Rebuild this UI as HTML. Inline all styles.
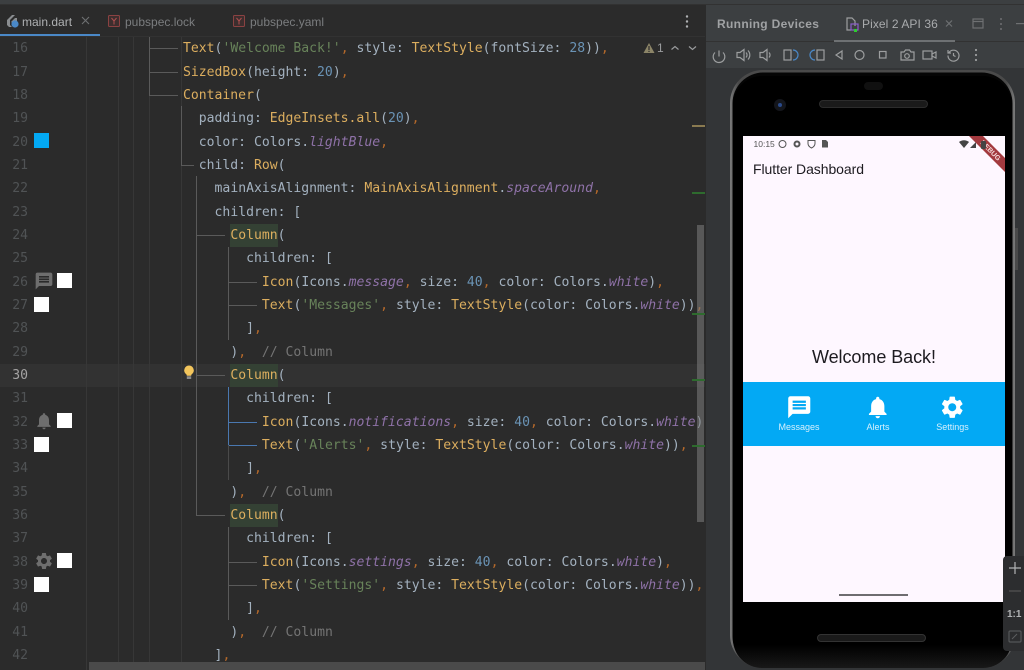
<!DOCTYPE html>
<html lang="en"><head><meta charset="utf-8"><title>Flutter Dashboard</title>
<style>
html,body{margin:0;padding:0;background:#2b2b2b}
#r{position:relative;width:1024px;height:670px;overflow:hidden;background:#2b2b2b}
.l,.n{position:absolute;white-space:pre;font:13.1px/23.33px "DejaVu Sans Mono","Liberation Mono",monospace;top:calc(37.4px + var(--l)*23.33px)}
.l{left:calc(183px + var(--x)*7.89px);color:#a3b1bf}
.n{left:0;width:28px;text-align:right;color:#505355}
.f{color:#dcae5f}.s{color:#68835a}.d{color:#6a93b5}.c{color:#b5692a}.i{color:#8f72a8;font-style:italic}.m{color:#747474}
.a{position:absolute}
.w{position:absolute;width:15px;height:15px;background:#fff}
.t{position:absolute;font:12px "Liberation Sans",sans-serif;color:#9c9e9f;top:15px;white-space:pre}
svg{position:absolute;overflow:visible}
#code{position:absolute;left:0;top:37px;width:705px;height:633px;overflow:hidden}
#code .l{margin-top:-37px}#code .n{margin-top:-37px}
</style></head><body><div id="r">
<svg width="0" height="0"><defs>
<path id="msg" d="M20 2H4c-1.1 0-1.99.9-1.99 2L2 22l4-4h14c1.1 0 2-.9 2-2V4c0-1.1-.9-2-2-2zm-2 12H6v-2h12v2zm0-3H6V9h12v2zm0-3H6V6h12v2z"/>
<path id="bell" d="M12 22c1.1 0 2-.9 2-2h-4c0 1.1.89 2 2 2zm6-6v-5c0-3.07-1.64-5.64-4.5-6.32V4c0-.83-.67-1.5-1.5-1.5s-1.5.67-1.5 1.5v.68C7.63 5.36 6 7.92 6 11v5l-2 2v1h16v-1l-2-2z"/>
<path id="gear" d="M19.14 12.94c.04-.3.06-.61.06-.94 0-.32-.02-.64-.07-.94l2.03-1.58c.18-.14.23-.41.12-.61l-1.92-3.32c-.12-.22-.37-.29-.59-.22l-2.39.96c-.5-.38-1.03-.7-1.62-.94l-.36-2.54c-.04-.24-.24-.41-.48-.41h-3.84c-.24 0-.43.17-.47.41l-.36 2.54c-.59.24-1.13.57-1.62.94l-2.39-.96c-.22-.08-.47 0-.59.22L2.74 8.87c-.12.21-.08.47.12.61l2.03 1.58c-.05.3-.09.63-.09.94s.02.64.07.94l-2.03 1.58c-.18.14-.23.41-.12.61l1.92 3.32c.12.22.37.29.59.22l2.39-.96c.5.38 1.03.7 1.62.94l.36 2.54c.05.24.24.41.48.41h3.84c.24 0 .44-.17.47-.41l.36-2.54c.59-.24 1.13-.56 1.62-.94l2.39.96c.22.08.47 0 .59-.22l1.92-3.32c.12-.22.07-.47-.12-.61l-2.01-1.58zM12 15.6c-1.98 0-3.6-1.62-3.6-3.6s1.62-3.6 3.6-3.6 3.6 1.62 3.6 3.6-1.62 3.6-3.6 3.6z"/>
<linearGradient id="fr" x1="0" x2="1" y1="0" y2="0"><stop offset="0" stop-color="#7a7a7a"/><stop offset=".03" stop-color="#4a4a4a"/><stop offset=".97" stop-color="#4a4a4a"/><stop offset="1" stop-color="#7a7a7a"/></linearGradient>
<linearGradient id="chin" x1="0" x2="0" y1="0" y2="1"><stop offset="0" stop-color="#000"/><stop offset=".96" stop-color="#000"/><stop offset="1" stop-color="#181818"/></linearGradient>
</defs></svg>

<!-- top strip & tabs -->
<div class="a" style="left:0;top:0;width:1024px;height:4px;background:#3c3f41"></div>
<div class="a" style="left:0;top:4px;width:1024px;height:1px;background:#323232"></div>
<div class="a" style="left:0;top:36px;width:705px;height:1px;background:#323232"></div>
<div class="a" style="left:0;top:34px;width:100px;height:2px;background:#4a88c7"></div>
<svg style="left:6px;top:14px" width="14" height="14"><path d="M1 6 6 1h3L4 6v5l2 2H3L1 11z" fill="#8a8d90"/><path d="M5 8l4-4h2v3l-3 3z" fill="#8a8d90"/><circle cx="9" cy="10" r="3.600" fill="#4a88c7"/></svg>
<div class="t" style="left:22px;color:#afb1b3">main.dart</div>
<svg style="left:81px;top:16px" width="10" height="10"><path d="M1 1l7 7M8 1 1 8" stroke="#6e7072" stroke-width="1.100"/></svg>
<svg style="left:108px;top:15px" width="12" height="12"><rect x=".5" y=".5" width="11" height="11" rx="1" fill="#3d2e2e" stroke="#8b4242"/><path d="M3.500 3l2.500 3L8.500 3M6 6v3.500" fill="none" stroke="#b05050"/></svg>
<div class="t" style="left:125px;color:#7b7d7f">pubspec.lock</div>
<svg style="left:233px;top:15px" width="12" height="12"><rect x=".5" y=".5" width="11" height="11" rx="1" fill="#3d2e2e" stroke="#8b4242"/><path d="M3.500 3l2.500 3L8.500 3M6 6v3.500" fill="none" stroke="#b05050"/></svg>
<div class="t" style="left:250px;color:#7b7d7f">pubspec.yaml</div>
<svg style="left:685px;top:15px" width="4" height="13"><circle cx="2" cy="1.500" r="1.200" fill="#afb1b3"/><circle cx="2" cy="6.500" r="1.200" fill="#afb1b3"/><circle cx="2" cy="11.500" r="1.200" fill="#afb1b3"/></svg>

<!-- editor -->
<div id="code">
<div class="a" style="left:0;top:327px;width:705px;height:23px;background:#323232"></div>
<div class="a" style="left:230px;top:187px;width:48px;height:23px;background:#344134"></div>
<div class="a" style="left:230px;top:327px;width:48px;height:23px;background:#344134"></div>
<div class="a" style="left:230px;top:467px;width:48px;height:23px;background:#344134"></div>
<svg style="left:0;top:-37px" width="705" height="670">
<g stroke="#373737" fill="none"><path d="M86.500 37V670M118.500 37V670M133.500 37V670M149.500 37V670M181.500 37V670"/></g>
<g stroke="#5a5a5a" fill="none">
<path d="M149.500 37V95.500H178M149.500 48.500H178M149.500 72.500H178"/>
<path d="M181.500 106V165.500H194"/>
<path d="M196.500 176V515.500H225M196.500 235.500H225M196.500 375.500H225"/>
<path d="M228.500 247V340M228.500 282.500H257M228.500 305.500H257"/>
<path d="M228.500 527V620M228.500 562.500H257M228.500 585.500H257"/>
</g>
<path d="M228.500 387V445.500H257M228.500 422.500H257" stroke="#4a78b0" fill="none"/>
<path d="M228.500 445V480" stroke="#4a4a4a"/>
</svg>

<div class="n" style="--l:0">16</div><div class="n" style="--l:1">17</div><div class="n" style="--l:2">18</div><div class="n" style="--l:3">19</div><div class="n" style="--l:4">20</div><div class="n" style="--l:5">21</div><div class="n" style="--l:6">22</div><div class="n" style="--l:7">23</div><div class="n" style="--l:8">24</div><div class="n" style="--l:9">25</div><div class="n" style="--l:10">26</div><div class="n" style="--l:11">27</div><div class="n" style="--l:12">28</div><div class="n" style="--l:13">29</div><div class="n" style="--l:14;color:#a4a3a3">30</div><div class="n" style="--l:15">31</div><div class="n" style="--l:16">32</div><div class="n" style="--l:17">33</div><div class="n" style="--l:18">34</div><div class="n" style="--l:19">35</div><div class="n" style="--l:20">36</div><div class="n" style="--l:21">37</div><div class="n" style="--l:22">38</div><div class="n" style="--l:23">39</div><div class="n" style="--l:24">40</div><div class="n" style="--l:25">41</div><div class="n" style="--l:26">42</div>

<div class="l" style="--l:0;--x:0"><span class="f">Text</span>(<span class="s">'Welcome Back!'</span><span class="c">,</span> style: <span class="f">TextStyle</span>(fontSize: <span class="d">28</span>))<span class="c">,</span></div>
<div class="l" style="--l:1;--x:0"><span class="f">SizedBox</span>(height: <span class="d">20</span>)<span class="c">,</span></div>
<div class="l" style="--l:2;--x:0"><span class="f">Container</span>(</div>
<div class="l" style="--l:3;--x:2">padding: <span class="f">EdgeInsets.all</span>(<span class="d">20</span>)<span class="c">,</span></div>
<div class="l" style="--l:4;--x:2">color: Colors.<span class="i">lightBlue</span><span class="c">,</span></div>
<div class="l" style="--l:5;--x:2">child: <span class="f">Row</span>(</div>
<div class="l" style="--l:6;--x:4">mainAxisAlignment: <span class="f">MainAxisAlignment</span>.<span class="i">spaceAround</span><span class="c">,</span></div>
<div class="l" style="--l:7;--x:4">children: [</div>
<div class="l" style="--l:8;--x:6"><span class="f">Column</span>(</div>
<div class="l" style="--l:9;--x:8">children: [</div>
<div class="l" style="--l:10;--x:10"><span class="f">Icon</span>(Icons.<span class="i">message</span><span class="c">,</span> size: <span class="d">40</span><span class="c">,</span> color: Colors.<span class="i">white</span>)<span class="c">,</span></div>
<div class="l" style="--l:11;--x:10"><span class="f">Text</span>(<span class="s">'Messages'</span><span class="c">,</span> style: <span class="f">TextStyle</span>(color: Colors.<span class="i">white</span>))<span class="c">,</span></div>
<div class="l" style="--l:12;--x:8">]<span class="c">,</span></div>
<div class="l" style="--l:13;--x:6">)<span class="c">,</span>  <span class="m">// Column</span></div>
<div class="l" style="--l:14;--x:6"><span class="f">Column</span>(</div>
<div class="l" style="--l:15;--x:8">children: [</div>
<div class="l" style="--l:16;--x:10"><span class="f">Icon</span>(Icons.<span class="i">notifications</span><span class="c">,</span> size: <span class="d">40</span><span class="c">,</span> color: Colors.<span class="i">white</span>)</div>
<div class="l" style="--l:17;--x:10"><span class="f">Text</span>(<span class="s">'Alerts'</span><span class="c">,</span> style: <span class="f">TextStyle</span>(color: Colors.<span class="i">white</span>))<span class="c">,</span></div>
<div class="l" style="--l:18;--x:8">]<span class="c">,</span></div>
<div class="l" style="--l:19;--x:6">)<span class="c">,</span>  <span class="m">// Column</span></div>
<div class="l" style="--l:20;--x:6"><span class="f">Column</span>(</div>
<div class="l" style="--l:21;--x:8">children: [</div>
<div class="l" style="--l:22;--x:10"><span class="f">Icon</span>(Icons.<span class="i">settings</span><span class="c">,</span> size: <span class="d">40</span><span class="c">,</span> color: Colors.<span class="i">white</span>)<span class="c">,</span></div>
<div class="l" style="--l:23;--x:10"><span class="f">Text</span>(<span class="s">'Settings'</span><span class="c">,</span> style: <span class="f">TextStyle</span>(color: Colors.<span class="i">white</span>))<span class="c">,</span></div>
<div class="l" style="--l:24;--x:8">]<span class="c">,</span></div>
<div class="l" style="--l:25;--x:6">)<span class="c">,</span>  <span class="m">// Column</span></div>
<div class="l" style="--l:26;--x:4">]<span class="c">,</span></div>
</div>

<!-- gutter icons -->
<div class="a" style="left:34px;top:133px;width:15px;height:15px;background:#03a9f4"></div>
<div class="w" style="left:57px;top:273px"></div><div class="w" style="left:34px;top:297px"></div>
<div class="w" style="left:57px;top:413px"></div><div class="w" style="left:34px;top:437px"></div>
<div class="w" style="left:57px;top:553px"></div><div class="w" style="left:34px;top:577px"></div>
<svg style="left:34px;top:271px" width="20" height="20" viewBox="0 0 24 24" fill="#6e6e6e"><use href="#msg"/></svg>
<svg style="left:34px;top:411px" width="20" height="20" viewBox="0 0 24 24" fill="#6e6e6e"><use href="#bell"/></svg>
<svg style="left:34px;top:551px" width="20" height="20" viewBox="0 0 24 24" fill="#6e6e6e"><use href="#gear"/></svg>
<svg style="left:183px;top:365px" width="12" height="15"><path d="M6 0.500a4.800 4.800 0 0 0-3 8.500c.5.500.8 1 .8 1.800h4.400c0-.8.3-1.300.8-1.800a4.800 4.800 0 0 0-3-8.500z" fill="#f2c55c"/><rect x="3.800" y="11.300" width="4.400" height="2.700" fill="#8a8a8a"/></svg>

<!-- inspection widget -->
<svg style="left:643px;top:42px" width="62" height="12"><path d="M6 1 11.500 11H.5z" fill="#8c8568"/><rect x="5.400" y="4" width="1.200" height="4" fill="#2b2b2b"/><rect x="5.400" y="8.800" width="1.200" height="1.200" fill="#2b2b2b"/><path d="M28.500 7.500 32 4.500l3.500 3M46 4.500l3.500 3 3.500-3" stroke="#9a9c9e" stroke-width="1.200" fill="none"/></svg>
<div class="a" style="left:657px;top:41px;font:12px 'Liberation Sans',sans-serif;color:#9a9c9e">1</div>

<!-- stripes/scrollbars -->
<div class="a" style="left:692px;top:125px;width:13px;height:2px;background:#8a7a50"></div>
<div class="a" style="left:692px;top:192px;width:13px;height:2px;background:#2e6b2e"></div>
<div class="a" style="left:697px;top:225px;width:7px;height:297px;background:rgba(125,125,125,.55)"></div>
<div class="a" style="left:692px;top:313px;width:13px;height:2px;background:#2e6b2e"></div>
<div class="a" style="left:692px;top:379px;width:13px;height:2px;background:#2e6b2e"></div>
<div class="a" style="left:692px;top:445px;width:13px;height:2px;background:#2e6b2e"></div>
<div class="a" style="left:89px;top:662px;width:616px;height:8px;background:#4a4a4a"></div>

<!-- right panel -->
<div class="a" style="left:705px;top:5px;width:319px;height:665px;background:#333537;border-left:1px solid #2b2b2b;box-sizing:border-box"></div>
<div class="a" style="left:706px;top:5px;width:318px;height:63px;background:#3c3f41"></div>
<div class="a" style="left:706px;top:41px;width:318px;height:1px;background:#323232"></div>
<div class="a" style="left:834px;top:40px;width:121px;height:2px;background:#6e7173"></div>
<div class="a" style="left:717px;top:17px;font:bold 12px 'Liberation Sans',sans-serif;letter-spacing:.33px;color:#a0a2a4;white-space:pre">Running Devices</div>
<div class="a" style="left:862px;top:17px;font:12px 'Liberation Sans',sans-serif;letter-spacing:.08px;color:#a9abad;white-space:pre">Pixel 2 API 36</div>
<svg style="left:700px;top:5px" width="324" height="63" fill="none" stroke="#9c9e9f" stroke-width="1.200">
<path d="M147 20.500v-7.500h5l3 3v5M147 20.500v4.500h4"/><rect x="151" y="19" width="7" height="6" stroke="#8a5fc7"/><rect x="154" y="24" width="3" height="3" fill="#2ecc2e" stroke="none"/>
<path d="M246 15.500l6 6m0-6l-6 6" stroke="#6e7072"/>
<rect x="273" y="14" width="10" height="9" stroke="#6e7072"/><path d="M273 16.500h10" stroke="#6e7072"/>
<g fill="#6e7072" stroke="none"><circle cx="301" cy="14" r="1"/><circle cx="301" cy="19" r="1"/><circle cx="301" cy="24" r="1"/><rect x="316" y="18" width="8" height="1.200"/></g>
<!-- toolbar -->
<path d="M19 45.500v6M15 47.500a5.800 5.800 0 1 0 8 0"/>
<path d="M37 47.500h3l4-3v11l-4-3h-3zM46 47.500a3.500 3.500 0 0 1 0 5M48 45.500a6.500 6.500 0 0 1 0 9"/>
<path d="M60 47.500h3l4-3v11l-4-3h-3zM69 47.500a3.500 3.500 0 0 1 0 5"/>
<rect x="84" y="45" width="7" height="10"/><path d="M93 45a5 5 0 0 1 0 10" stroke="#4a88c7"/>
<rect x="117" y="45" width="7" height="10"/><path d="M115 55a5 5 0 0 1 0-10" stroke="#4a88c7"/>
<path d="M136 50l6-4v8z"/>
<circle cx="159.500" cy="50" r="4.500"/>
<rect x="179.500" y="46.500" width="6.500" height="6.500"/>
<path d="M201 47h3l1.500-2h4l1.500 2h3v8h-13z"/><circle cx="207" cy="51" r="2.300"/>
<rect x="223" y="46" width="9" height="8"/><path d="M232 49l4-2v6l-4-2z"/>
<path d="M249 47.500a5.500 5.500 0 1 1-1 3M248 45v3h3M253.500 48v2.500l2 1"/>
<g fill="#9c9e9f" stroke="none"><circle cx="276" cy="45" r="1.100"/><circle cx="276" cy="50" r="1.100"/><circle cx="276" cy="55" r="1.100"/></g>
</svg>

<!-- phone -->
<svg style="left:0;top:0" width="1024" height="670">
<rect x="730" y="70" width="285" height="598" rx="33" fill="url(#fr)"/>
<rect x="732.500" y="72.500" width="280" height="595" rx="31" fill="#050505"/>
<rect x="733" y="76" width="279" height="592" rx="29" fill="url(#chin)"/>
<rect x="1015" y="228" width="3" height="42" fill="#4a4a4a"/>
<rect x="819.500" y="100.500" width="108" height="7" rx="3.500" fill="#1a1a1a" stroke="#2c2c2c"/>
<rect x="864" y="82" width="19" height="8" rx="4" fill="#101010"/>
<circle cx="780" cy="105" r="6" fill="#14161c"/><circle cx="780" cy="105" r="2" fill="#2a4a8a"/>
<rect x="817.500" y="634.500" width="108" height="7" rx="3.500" fill="#1a1a1a" stroke="#333"/>
<!-- screen -->
<rect x="743" y="136" width="262" height="466" fill="#fef7ff"/>
<!-- ribbon -->
<path d="M969 136h14l22 22v14z" fill="#a33a3f"/>
<text transform="translate(991 150) rotate(45)" text-anchor="middle" y="3" font-family="Liberation Sans,sans-serif" font-size="7" font-weight="bold" fill="#f4dcdc">DEBUG</text>
<!-- status bar -->
<text x="753.500" y="147" font-family="Liberation Sans,sans-serif" font-size="8.500" fill="#555">10:15</text>
<g fill="none" stroke="#555"><circle cx="782.500" cy="144" r="3.500"/><circle cx="797" cy="144" r="2.500" stroke-width="2"/><path d="M808 140.500h7v3c0 2-1.500 3.500-3.500 4.500-2-1-3.500-2.500-3.500-4.500z"/></g>
<path d="M822 140h4l2 2v5.500h-6z" fill="#555"/>
<path d="M959 142a8 8 0 0 1 10 0l-5 6z" fill="#444"/><path d="M970 148l6-6v6z" fill="#444"/><rect x="981" y="141" width="5" height="8" rx="1" fill="#444"/>
<text x="753" y="174" font-family="Liberation Sans,sans-serif" font-size="14" fill="#1d1b20" textLength="111">Flutter Dashboard</text>
<text x="812" y="363" font-family="Liberation Sans,sans-serif" font-size="18" fill="#1d1b20" textLength="124">Welcome Back!</text>
<rect x="743" y="382" width="262" height="64" fill="#03a9f4"/>
<svg x="786" y="394" width="26.500" height="26.500" viewBox="0 0 24 24" fill="#fff"><use href="#msg"/></svg>
<svg x="864.500" y="394" width="26.500" height="26.500" viewBox="0 0 24 24" fill="#fff"><use href="#bell"/></svg>
<svg x="939" y="394" width="26.500" height="26.500" viewBox="0 0 24 24" fill="#fff"><use href="#gear"/></svg>
<g font-family="Liberation Sans,sans-serif" font-size="9" fill="#d6f0fd" text-anchor="middle"><text x="799" y="430">Messages</text><text x="878" y="430">Alerts</text><text x="952.500" y="430">Settings</text></g>
<rect x="839" y="594" width="69" height="2" fill="#6e6c70"/>
</svg>

<!-- zoom controls -->
<div class="a" style="left:1003px;top:556px;width:21px;height:95px;background:#2c2d2f;border-radius:4px 0 0 4px"></div>
<svg style="left:1003px;top:556px" width="21" height="95" fill="none"><path d="M12 6v12M6 12h12" stroke="#b0b2b4" stroke-width="1.200"/><path d="M6 35h12" stroke="#555" stroke-width="1.200"/><rect x="6" y="75" width="12" height="11" rx="1" stroke="#5c5e60"/><path d="M9 83l5-5" stroke="#5c5e60"/></svg>
<div class="a" style="left:1007px;top:609px;font:bold 10px 'Liberation Sans',sans-serif;color:#b0b2b4">1:1</div>
</div></body></html>
